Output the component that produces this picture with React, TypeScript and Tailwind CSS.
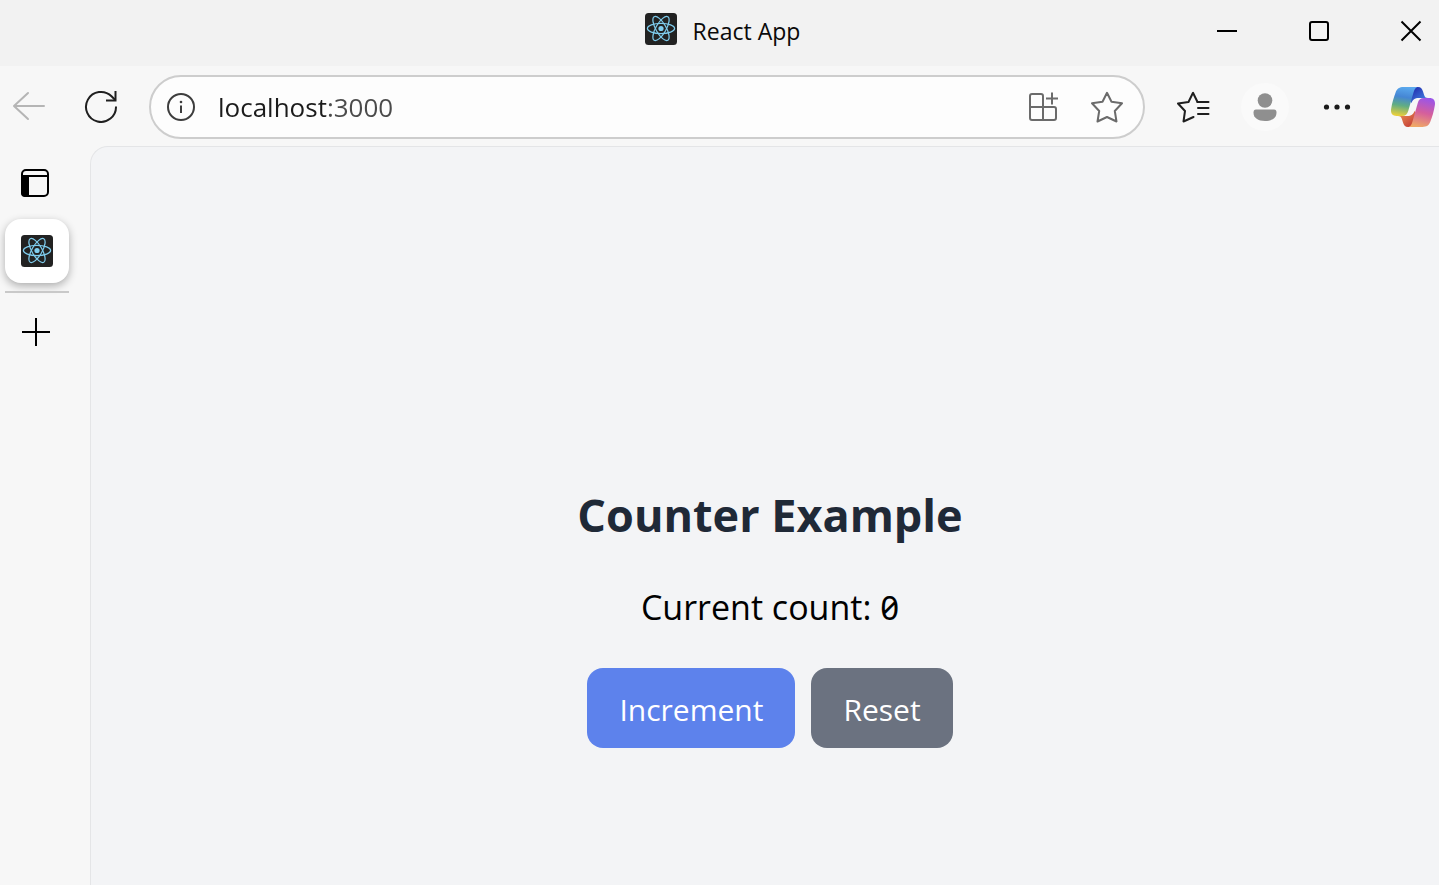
import { useState } from "react";

function ReactLogo() {
  return (
    <svg viewBox="0 0 32 32" className="size-8 shrink-0" aria-hidden="true">
      <rect width="32" height="32" rx="3.5" fill="#222" />
      <g fill="none" stroke="#7fcdee" strokeWidth="1.25">
        <ellipse cx="16" cy="15.5" rx="13.6" ry="5.1" />
        <ellipse cx="16" cy="15.5" rx="13.6" ry="5.1" transform="rotate(60 16 15.5)" />
        <ellipse cx="16" cy="15.5" rx="13.6" ry="5.1" transform="rotate(120 16 15.5)" />
      </g>
      <circle cx="16" cy="15.5" r="2.6" fill="#7fcdee" />
    </svg>
  );
}

function CopilotLogo() {
  return (
    <svg viewBox="0 0 44 40" className="h-10 w-11" aria-hidden="true">
      <defs>
        <linearGradient id="cp-left" x1="0.55" y1="0" x2="0.4" y2="1">
          <stop offset="0" stopColor="#5aa9ee" />
          <stop offset="0.35" stopColor="#4586d4" />
          <stop offset="0.65" stopColor="#61ad83" />
          <stop offset="1" stopColor="#e8cf3c" />
        </linearGradient>
        <linearGradient id="cp-right" x1="0.65" y1="0" x2="0.4" y2="1">
          <stop offset="0" stopColor="#9b55e8" />
          <stop offset="0.5" stopColor="#d55f9c" />
          <stop offset="1" stopColor="#efa866" />
        </linearGradient>
        <linearGradient id="cp-top" x1="0" y1="0" x2="1" y2="1">
          <stop offset="0.25" stopColor="#2638b5" />
          <stop offset="1" stopColor="#4a93ec" />
        </linearGradient>
        <linearGradient id="cp-bottom" x1="0" y1="0" x2="1" y2="1">
          <stop offset="0" stopColor="#ee9a55" />
          <stop offset="0.75" stopColor="#c9473a" />
        </linearGradient>
      </defs>
      <path d="M20 0H27C30 0 31.2 2 32 4.5L33.2 8.3C33.9 10.4 35 11 37 11H28C23.5 11 21.8 12.5 20.5 16L17 12Z" fill="url(#cp-top)" />
      <path d="M24 40H17C14 40 12.8 38 12 35.5L10.8 31.7C10.1 29.6 9 29 7 29H16C20.5 29 22.2 27.5 23.5 24L27 28Z" fill="url(#cp-bottom)" />
      <path d="M12.5 0H27.5C24.5 0 23.4 2.5 22.5 5.5L17.3 23.8C16.3 27.4 14.5 29 11 29H5.5C1 29-.6 26 .2 21.5C1 16 2.7 10.5 4.6 5.4C6 1.6 8.4 0 12.5 0Z" fill="url(#cp-left)" />
      <path d="M31.5 40H16.5C19.5 40 20.6 37.5 21.5 34.5L26.7 16.2C27.7 12.6 29.5 11 33 11H38.5C43 11 44.6 14 43.8 18.5C43 24 41.3 29.5 39.4 34.6C38 38.4 35.6 40 31.5 40Z" fill="url(#cp-right)" />
    </svg>
  );
}

function TitleBar() {
  return (
    <header className="grid h-[66px] grid-cols-[1fr_auto_1fr] items-center bg-[#f2f2f2] pb-1">
      <span />
      <div className="flex items-center gap-4 pl-1.5">
        <div className="pb-1"><ReactLogo /></div>
        <span className="text-[23px] leading-8 text-[#0a0a0a]">React App</span>
      </div>
      <div className="flex justify-end gap-[68px] pr-4">
        <button aria-label="Minimize" className="size-6">
          <svg viewBox="0 0 24 24" className="size-6" stroke="#000" strokeWidth="2"><path d="M2 12H22" /></svg>
        </button>
        <button aria-label="Maximize" className="size-6">
          <svg viewBox="0 0 24 24" className="size-6" fill="none" stroke="#000" strokeWidth="2"><rect x="3" y="3" width="18" height="18" rx="2" /></svg>
        </button>
        <button aria-label="Close" className="size-6">
          <svg viewBox="0 0 24 24" className="size-6" stroke="#000" strokeWidth="2"><path d="M2.5 2.5L21.5 21.5M21.5 2.5L2.5 21.5" /></svg>
        </button>
      </div>
    </header>
  );
}

function Toolbar() {
  return (
    <nav className="flex h-20 items-center pl-3 pr-1 pt-0.5">
      <button aria-label="Back" className="size-9">
        <svg viewBox="0 0 36 36" className="size-9" fill="none" stroke="#b5b5b5" strokeWidth="2" strokeLinecap="round" strokeLinejoin="round">
          <path d="M32 17H2M16 4L2 17L16 30" />
        </svg>
      </button>
      <button aria-label="Refresh" className="ml-9 size-9">
        <svg viewBox="0 0 36 36" className="size-9" fill="none" stroke="#1f1f1f" strokeWidth="2">
          <path d="M32 17.5A15 15 0 1 1 27.500 7.200L31.500 11.200" />
          <path d="M31.500 2V11.500H22" />
        </svg>
      </button>
      <div className="ml-[29px] flex h-16 min-w-0 flex-1 items-center rounded-full border-2 border-[#cdcdcd] bg-[#fdfdfd] pl-[15px] pr-5">
        <button aria-label="View site information" className="size-8 shrink-0">
          <svg viewBox="0 0 32 32" className="size-8" fill="none" stroke="#3d3d3d" strokeWidth="2">
            <circle cx="15" cy="16" r="13" />
            <path d="M15 14.5V22" />
            <circle cx="15" cy="11" r="1.3" fill="#3d3d3d" stroke="none" />
          </svg>
        </button>
        <input
          aria-label="Address"
          defaultValue="localhost:3000"
          className="ml-5 h-10 min-w-0 flex-1 bg-[linear-gradient(to_right,#1b1b1b_108px,#4a4a4a_108px)] bg-clip-text text-[26px] text-transparent caret-black outline-none"
        />
        <button aria-label="App available" className="size-8 shrink-0">
          <svg viewBox="0 0 32 32" className="size-8" fill="none" stroke="#6b6b6b" strokeWidth="2">
            <path d="M16 16V5a2 2 0 0 0-2-2H5a2 2 0 0 0-2 2V27a2 2 0 0 0 2 2H27a2 2 0 0 0 2-2V18a2 2 0 0 0-2-2ZM16 16V29M3 16H16" />
            <path d="M25 1.500V13.500M19 7.500H31" />
          </svg>
        </button>
        <button aria-label="Add to favorites" className="ml-8 size-8 shrink-0">
          <svg viewBox="0 0 32 32" className="size-8" fill="none" stroke="#6b6b6b" strokeWidth="2" strokeLinejoin="round">
            <path d="M16 1.800L20.500 10.700L31 12.300L23.800 20L25.500 30.500L16 26L6.500 30.500L8.200 20L1 12.300L11.500 10.700Z" />
          </svg>
        </button>
      </div>
      <button aria-label="Favorites" className="ml-8 h-8 w-[34px]">
        <svg viewBox="0 0 34 32" className="h-8 w-[34px]" fill="none" stroke="#1f1f1f" strokeWidth="2" strokeLinecap="round" strokeLinejoin="round">
          <path d="M20.500 11L16 1.800L11.500 11L1 12.500L8 20L6.500 30.500L16.500 26" />
          <path d="M20.500 11H31.500M21 17H31.500M21 23H31.500" />
        </svg>
      </button>
      <button aria-label="Profile" className="ml-[30px] size-12 rounded-full bg-[#fafafa]">
        <svg viewBox="0 0 48 48" className="size-12" fill="#8f8f8f">
          <circle cx="24" cy="17.500" r="7.300" />
          <path d="M15 26.500H33Q35.500 26.500 35.500 29.500C35.500 35 31 38 24 38S12.500 35 12.500 29.500Q12.500 26.500 15 26.500Z" />
        </svg>
      </button>
      <button aria-label="Settings and more" className="ml-8 size-8">
        <svg viewBox="0 0 32 32" className="size-8" fill="#1b1b1b">
          <circle cx="5.500" cy="16" r="2.600" />
          <circle cx="16" cy="16" r="2.600" />
          <circle cx="26.500" cy="16" r="2.600" />
        </svg>
      </button>
      <button aria-label="Copilot" className="ml-[38px] h-10 w-11"><CopilotLogo /></button>
    </nav>
  );
}

function Sidebar() {
  return (
    <aside className="flex w-[90px] shrink-0 flex-col items-start pl-[5px] pt-[21px]">
      <button aria-label="Tab actions menu" className="ml-[14px] size-8">
        <svg viewBox="0 0 32 32" className="size-8" fill="none" stroke="#000" strokeWidth="2">
          <rect x="3" y="3" width="26" height="26" rx="4" />
          <path d="M3 9H29" />
          <path d="M3 9H9V29H6Q3 29 3 26Z" fill="#000" />
        </svg>
      </button>
      <button aria-label="React App tab" className="mt-5 flex size-16 items-center justify-center rounded-2xl bg-white shadow-[0_3px_9px_rgba(0,0,0,0.3)]">
        <ReactLogo />
      </button>
      <div className="mt-2 h-[2px] w-16 bg-[#c9c9c9]" />
      <button aria-label="New tab" className="ml-[15px] mt-[23px] size-8">
        <svg viewBox="0 0 32 32" className="size-8" stroke="#000" strokeWidth="2"><path d="M16 2V30M2 16H30" /></svg>
      </button>
    </aside>
  );
}

function Counter() {
  const [count, setCount] = useState(0);
  return (
    <main className="flex flex-1 flex-col items-center rounded-tl-[18px] border-l border-t border-[#e4e5e7] bg-[#f3f4f6] pl-2.5 pt-[336px]">
      <h1 className="text-[45px] font-bold leading-[64px] text-[#1f2937]">Counter Example</h1>
      <p className="mt-8 text-[34px] leading-[56px] text-black">
        Current count: <span className="font-['Noto_Sans',sans-serif] text-[33px] slashed-zero">{count}</span>
      </p>
      <div className="mt-8 flex gap-4">
        <button onClick={() => setCount(count + 1)} className="h-20 rounded-2xl bg-[#5d82ec] px-8 pt-0.5 text-[30px] text-white">
          Increment
        </button>
        <button onClick={() => setCount(0)} className="h-20 rounded-2xl bg-[#6b7280] px-8 pt-0.5 text-[30px] text-white">
          Reset
        </button>
      </div>
    </main>
  );
}

export default function App() {
  return (
    <div className="flex min-h-screen flex-col bg-[#f7f7f7] font-['Open_Sans',sans-serif]">
      <TitleBar />
      <Toolbar />
      <div className="flex flex-1">
        <Sidebar />
        <Counter />
      </div>
    </div>
  );
}
